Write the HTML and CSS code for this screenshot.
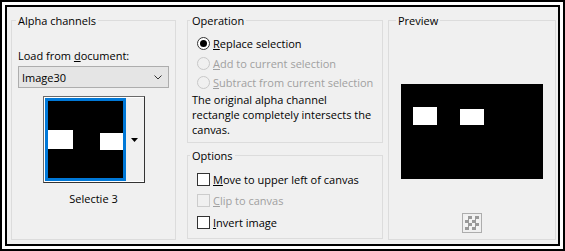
FILE: index.html
```html
<!DOCTYPE html>
<html lang="en">
<head>
    <meta charset="UTF-8">
    <title>Alpha channels</title>
    <link rel="stylesheet" href="styles.css">
</head>
<body>
    <div class="frame">
        <div class="dialog">
            <fieldset class="group alpha">
                <legend>Alpha channels</legend>
                <div class="label">Load from <u>d</u>ocument:</div>
                <div class="combo">
                    <span>Image30</span>
                    <svg class="chevron" width="8" height="5" viewBox="0 0 8 5">
                        <polyline points="0.5,0.5 4,4 7.5,0.5" fill="none" stroke="#333" stroke-width="1"/>
                    </svg>
                </div>
                <div class="picker">
                    <div class="thumb">
                        <svg width="75" height="77" viewBox="0 0 75 77">
                            <rect width="75" height="77" fill="#000"/>
                            <rect x="0" y="29" width="25" height="19" fill="#fff"/>
                            <rect x="52" y="32" width="23" height="17" fill="#fff"/>
                        </svg>
                    </div>
                    <div class="picker-btn">
                        <svg width="7" height="4" viewBox="0 0 7 4">
                            <polygon points="0,0 7,0 3.5,4" fill="#000"/>
                        </svg>
                    </div>
                </div>
                <div class="thumb-name">Selectie 3</div>
            </fieldset>

            <div class="middle">
                <fieldset class="group operation">
                    <legend>Operation</legend>
                    <div class="choice">
                        <span class="radio checked"></span>
                        <span><u>R</u>eplace selection</span>
                    </div>
                    <div class="choice disabled">
                        <span class="radio"></span>
                        <span><u>A</u>dd to current selection</span>
                    </div>
                    <div class="choice disabled">
                        <span class="radio"></span>
                        <span><u>S</u>ubtract from current selection</span>
                    </div>
                    <p class="note">The original alpha channel<br>rectangle completely intersects the<br>canvas.</p>
                </fieldset>

                <fieldset class="group options">
                    <legend>Options</legend>
                    <div class="choice tall">
                        <span class="check"></span>
                        <span><u>M</u>ove to upper left of canvas</span>
                    </div>
                    <div class="choice tall disabled">
                        <span class="check"></span>
                        <span><u>C</u>lip to canvas</span>
                    </div>
                    <div class="choice tall">
                        <span class="check"></span>
                        <span><u>I</u>nvert image</span>
                    </div>
                </fieldset>
            </div>

            <fieldset class="group preview">
                <legend>Preview</legend>
                <svg class="preview-img" width="142" height="95" viewBox="0 0 142 95">
                    <rect width="142" height="95" fill="#000"/>
                    <rect x="12" y="23" width="24" height="18" fill="#fff"/>
                    <rect x="59" y="25" width="24" height="16" fill="#fff"/>
                </svg>
                <div class="checker-btn"><span class="checker"></span></div>
            </fieldset>
        </div>
    </div>
</body>
</html>
```

FILE: styles.css
```css
/* Dialog frame */
body {
    margin: 0;
    background: #fff;
    font-family: "Segoe UI", "Open Sans", sans-serif;
    font-size: 11px;
    color: #000;
}

.frame {
    width: 565px;
    height: 251px;
    box-sizing: border-box;
    border: 2px solid #000;
    padding: 3px;
    background: #fff;
}

.dialog {
    height: 100%;
    box-sizing: border-box;
    border: 2px solid #000;
    background: #f0f0f0;
    display: flex;
    align-items: flex-start;
    padding: 6px 0 0 4px;
}

/* Group boxes */
.group {
    margin: 0;
    min-width: 0;
    box-sizing: border-box;
    border: 1px solid #dcdcdc;
}

.group legend {
    padding: 0 2px;
    margin-left: -2px;
    line-height: 15px;
}

.alpha {
    width: 165px;
    height: 227px;
    padding: 20px 6px 0 6px;
}

.middle {
    width: 196px;
    margin-left: 11px;
    display: flex;
    flex-direction: column;
    gap: 4.5px;
}

.operation {
    height: 130px;
    padding: 5.75px 4px 0 4px;
}

.options {
    height: 91.5px;
    padding: 5.75px 4px 0 4px;
}

.preview {
    width: 168px;
    height: 227px;
    margin-left: 5px;
    padding: 56px 9px 0 9px;
    display: flex;
    flex-direction: column;
    align-items: center;
}

/* Alpha channels */
.label {
    line-height: 15px;
}

.combo {
    margin-top: 3px;
    height: 22px;
    box-sizing: border-box;
    border: 1px solid #adadad;
    background: #e5e5e5;
    display: flex;
    align-items: center;
    justify-content: space-between;
    padding: 0 6px 0 3px;
}

.picker {
    width: 102px;
    margin: 8px auto 0;
    box-sizing: border-box;
    display: flex;
    border: 1px solid #6a6a6a;
    border-right-color: #333;
    border-bottom-color: #333;
    background: #fff;
    padding: 1px 0 1px 1px;
}

.thumb {
    border: 3px solid #0078d7;
    display: flex;
}

.picker-btn {
    flex: 1;
    background: #f0f0f0;
    display: flex;
    align-items: center;
    justify-content: center;
}

.thumb-name {
    margin-top: 7.5px;
    text-align: center;
    line-height: 15px;
}

/* Radios and checkboxes */
.choice {
    display: flex;
    align-items: center;
    gap: 3px;
    height: 19.5px;
    padding-left: 5px;
    white-space: nowrap;
}

.choice.tall {
    height: 21.5px;
}

.choice.disabled {
    color: #a0a0a0;
}

.radio {
    width: 13px;
    height: 13px;
    flex: none;
    box-sizing: border-box;
    border: 1px solid #333;
    border-radius: 50%;
    background: #fff;
    display: flex;
    align-items: center;
    justify-content: center;
}

.radio.checked::after {
    content: "";
    width: 7px;
    height: 7px;
    border-radius: 50%;
    background: #000;
}

.disabled .radio {
    border-color: #c8c8c8;
    background: #f0f0f0;
}

.check {
    width: 13px;
    height: 13px;
    flex: none;
    box-sizing: border-box;
    border: 1px solid #333;
    background: #fff;
}

.disabled .check {
    border-color: #cccccc;
    background: #f0f0f0;
}

.note {
    margin: 0;
    line-height: 15px;
    white-space: nowrap;
}

/* Preview */
.checker-btn {
    margin-top: 34px;
    width: 20px;
    height: 20px;
    box-sizing: border-box;
    border: 1px solid #adadad;
    padding: 2px;
    display: flex;
}

.checker {
    flex: 1;
    background: conic-gradient(#9a9a9a 25%, #f4f4f4 0 50%, #9a9a9a 0 75%, #f4f4f4 0) 0 0 / 7px 7px;
}
```
